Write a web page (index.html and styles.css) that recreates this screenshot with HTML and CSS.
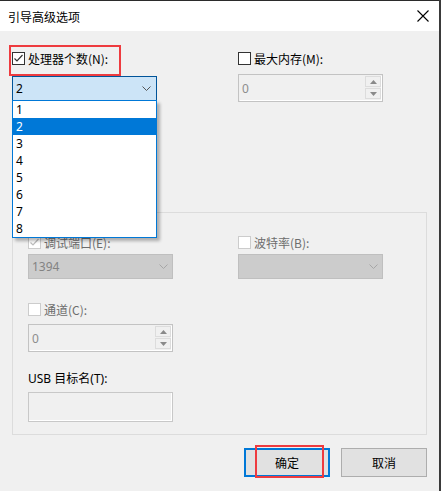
FILE: index.html
```html
<!DOCTYPE html>
<html lang="zh-CN">
<head>
<meta charset="utf-8">
<title>引导高级选项</title>
<link rel="stylesheet" href="styles.css">
</head>
<body>
<div class="window">
  <div class="titlebar">
    <span class="title">引导高级选项</span>
    <svg class="close" width="12" height="12" viewBox="0 0 12 12"><path d="M0.5 0.5 L11.5 11.5 M11.5 0.5 L0.5 11.5" stroke="#000" stroke-width="1.1" fill="none"/></svg>
  </div>
  <div class="content">
    <div class="top-grid">
      <div class="field">
        <label class="check-label highlight">
          <span class="cb"><svg width="11" height="11" viewBox="0 0 11 11"><path d="M1.5 5.5 L4 8 L9.5 2" stroke="#333" stroke-width="1.2" fill="none"/></svg></span>
          <span>处理器个数(N):</span>
        </label>
        <div class="combo-wrap">
          <div class="combo active">
            <span>2</span>
            <svg class="chev" width="9" height="5" viewBox="0 0 9 5"><path d="M0.5 0.5 L4.5 4.5 L8.5 0.5" stroke="#555" fill="none"/></svg>
          </div>
          <ul class="listbox">
            <li>1</li>
            <li class="sel">2</li>
            <li>3</li>
            <li>4</li>
            <li>5</li>
            <li>6</li>
            <li>7</li>
            <li>8</li>
          </ul>
        </div>
      </div>
      <div class="field">
        <label class="check-label">
          <span class="cb"></span>
          <span>最大内存(M):</span>
        </label>
        <div class="spin spin-top">
          <span class="spin-val">0</span>
          <div class="spin-btns">
            <span class="sb"><svg width="7" height="4" viewBox="0 0 7 4"><path d="M0 4 L3.5 0 L7 4Z" fill="#8a8a8a"/></svg></span>
            <span class="sb"><svg width="7" height="4" viewBox="0 0 7 4"><path d="M0 0 L3.5 4 L7 0Z" fill="#8a8a8a"/></svg></span>
          </div>
        </div>
      </div>
    </div>

    <div class="group">
      <div class="group-grid">
        <div class="field">
          <label class="check-label disabled">
            <span class="cb dis"><svg width="11" height="11" viewBox="0 0 11 11"><path d="M1.5 5.5 L4 8 L9.5 2" stroke="#bcbcbc" stroke-width="1.2" fill="none"/></svg></span>
            <span>调试端口(E):</span>
          </label>
          <div class="combo dcombo">
            <span>1394</span>
            <svg class="chev" width="9" height="5" viewBox="0 0 9 5"><path d="M0.5 0.5 L4.5 4.5 L8.5 0.5" stroke="#a6a6a6" fill="none"/></svg>
          </div>
        </div>
        <div class="field">
          <label class="check-label disabled">
            <span class="cb dis"></span>
            <span>波特率(B):</span>
          </label>
          <div class="combo dcombo">
            <span></span>
            <svg class="chev" width="9" height="5" viewBox="0 0 9 5"><path d="M0.5 0.5 L4.5 4.5 L8.5 0.5" stroke="#a6a6a6" fill="none"/></svg>
          </div>
        </div>
        <div class="field row2">
          <label class="check-label disabled">
            <span class="cb dis"></span>
            <span>通道(C):</span>
          </label>
          <div class="spin spin-low">
            <span class="spin-val">0</span>
            <div class="spin-btns">
              <span class="sb"><svg width="7" height="4" viewBox="0 0 7 4"><path d="M0 4 L3.5 0 L7 4Z" fill="#8a8a8a"/></svg></span>
              <span class="sb"><svg width="7" height="4" viewBox="0 0 7 4"><path d="M0 0 L3.5 4 L7 0Z" fill="#8a8a8a"/></svg></span>
            </div>
          </div>
        </div>
        <div class="field row3">
          <span class="plain-label">USB 目标名(T):</span>
          <div class="textbox"></div>
        </div>
      </div>
    </div>

    <div class="buttons">
      <button class="btn default"><span class="btn-mark">确定</span></button>
      <button class="btn">取消</button>
    </div>
  </div>
</div>
</body>
</html>
```

FILE: styles.css
```css
* { box-sizing: border-box; }
html, body { margin: 0; padding: 0; }
body {
  background: #3a3a3a;
  width: 441px;
  height: 491px;
  overflow: hidden;
  font-family: "Segoe UI", "Noto Sans", "Noto Sans CJK SC", sans-serif;
  font-size: 12px;
  color: #000;
}
.window {
  width: 439px;
  height: 491px;
  background: #f0f0f0;
  border-top: 1px solid #2b2b2b;
}
.titlebar {
  height: 30px;
  background: #fff;
  display: flex;
  align-items: center;
  justify-content: space-between;
  padding: 0 10px 0 8px;
}
.title {
  font-family: "Noto Sans CJK SC", sans-serif;
  font-size: 12px;
  line-height: 14px;
  margin-top: 1px;
}
.close { margin-top: 0px; margin-right: 0px; }

.content {
  padding: 21px 12px 0 12px;
}
.top-grid {
  display: grid;
  grid-template-columns: 145px 145px;
  column-gap: 81px;
  align-items: start;
}
.field { display: flex; flex-direction: column; }

.check-label {
  display: flex;
  align-items: center;
  gap: 3px;
  height: 13px;
  line-height: 13px;
  font-family: "Noto Sans CJK SC", sans-serif;
  font-size: 12px;
  white-space: nowrap;
}
.check-label.disabled { color: #6d6d6d; }
.highlight { position: relative; width: max-content; }
.highlight::after {
  content: "";
  position: absolute;
  left: -3px;
  top: -7px;
  width: 108px;
  height: 27px;
  border: 2px solid #ee3b3f;
}
.cb {
  width: 13px;
  height: 13px;
  border: 1px solid #333;
  background: #fff;
  display: flex;
  align-items: center;
  justify-content: center;
  flex: none;
}
.cb.dis { border-color: #cccccc; background: #fff; }

.combo-wrap { position: relative; margin-top: 11px; }
.combo {
  height: 25px;
  width: 145px;
  display: flex;
  align-items: center;
  justify-content: space-between;
  padding: 0 4px 0 3px;
  font-size: 12px;
}
.combo.active {
  background: #cce4f7;
  border: 1px solid #005499;
}
.combo .chev { margin-right: 0px; }
.combo.active .chev { margin-right: 1px; }

.listbox {
  position: absolute;
  top: 24px;
  left: 0;
  width: 145px;
  margin: 0;
  padding: 0;
  list-style: none;
  background: #fff;
  border: 1px solid #0078d7;
  box-shadow: 3px 3px 3px rgba(0,0,0,0.28);
  z-index: 5;
}
.listbox li {
  height: 17px;
  line-height: 17px;
  padding-left: 3px;
}
.listbox li.sel { background: #0078d7; color: #fff; }

.spin {
  width: 145px;
  height: 28px;
  border: 1px solid #c3c3c3;
  box-shadow: inset 1px 1px 0 #f0f0f0, inset -1px -1px 0 #fff;
  background: #f0f0f0;
  display: flex;
  align-items: stretch;
  justify-content: space-between;
}
.spin-top { margin-top: 9px; }
.spin-low { margin-top: 8px; }
.spin-val {
  color: #8d8d8d;
  padding-left: 3px;
  display: flex;
  align-items: center;
}
.spin-btns {
  display: flex;
  flex-direction: column;
  width: 17px;
  padding: 1px 1px 2px 0;
  gap: 1px;
}
.sb {
  flex: 1;
  border: 1px solid #dcdcdc;
  background: #f0f0f0;
  display: flex;
  align-items: center;
  justify-content: center;
}

.group {
  margin-top: 110px;
  width: 415px;
  height: 223px;
  border: 1px solid #dcdcdc;
  padding: 23px 0 0 15px;
}
.group-grid {
  display: grid;
  grid-template-columns: 145px 145px;
  column-gap: 65px;
  align-items: start;
}
.dcombo {
  margin-top: 5px;
  background: #cccccc;
  border: 1px solid #bfbfbf;
  color: #838383;
  padding-left: 3px;
}
.row2 { margin-top: 24px; }
.row3 { margin-top: 20px; grid-column: 1; }
.plain-label {
  height: 13px;
  line-height: 13px;
  font-family: "Noto Sans", "Noto Sans CJK SC", sans-serif;
  font-size: 12px;
  white-space: nowrap;
}
.textbox {
  margin-top: 7px;
  width: 145px;
  height: 30px;
  border: 1px solid #c8c8c8;
  box-shadow: inset -1px -1px 0 #fff, inset 1px 1px 0 #f0f0f0;
  background: #f0f0f0;
}

.buttons {
  display: flex;
  justify-content: flex-end;
  gap: 11px;
  margin-top: 13px;
}
.btn {
  width: 86px;
  height: 29px;
  background: #e1e1e1;
  border: 1px solid #adadad;
  font-family: "Noto Sans CJK SC", sans-serif;
  font-size: 12px;
  color: #000;
  padding: 0;
  display: flex;
  align-items: center;
  justify-content: center;
}
.btn.default { border: 2px solid #0078d7; }
.btn-mark { position: relative; }
.btn-mark::after {
  content: "";
  position: absolute;
  left: -20px;
  top: -9px;
  width: 65px;
  height: 29px;
  border: 2px solid #ee3b3f;
}
```
